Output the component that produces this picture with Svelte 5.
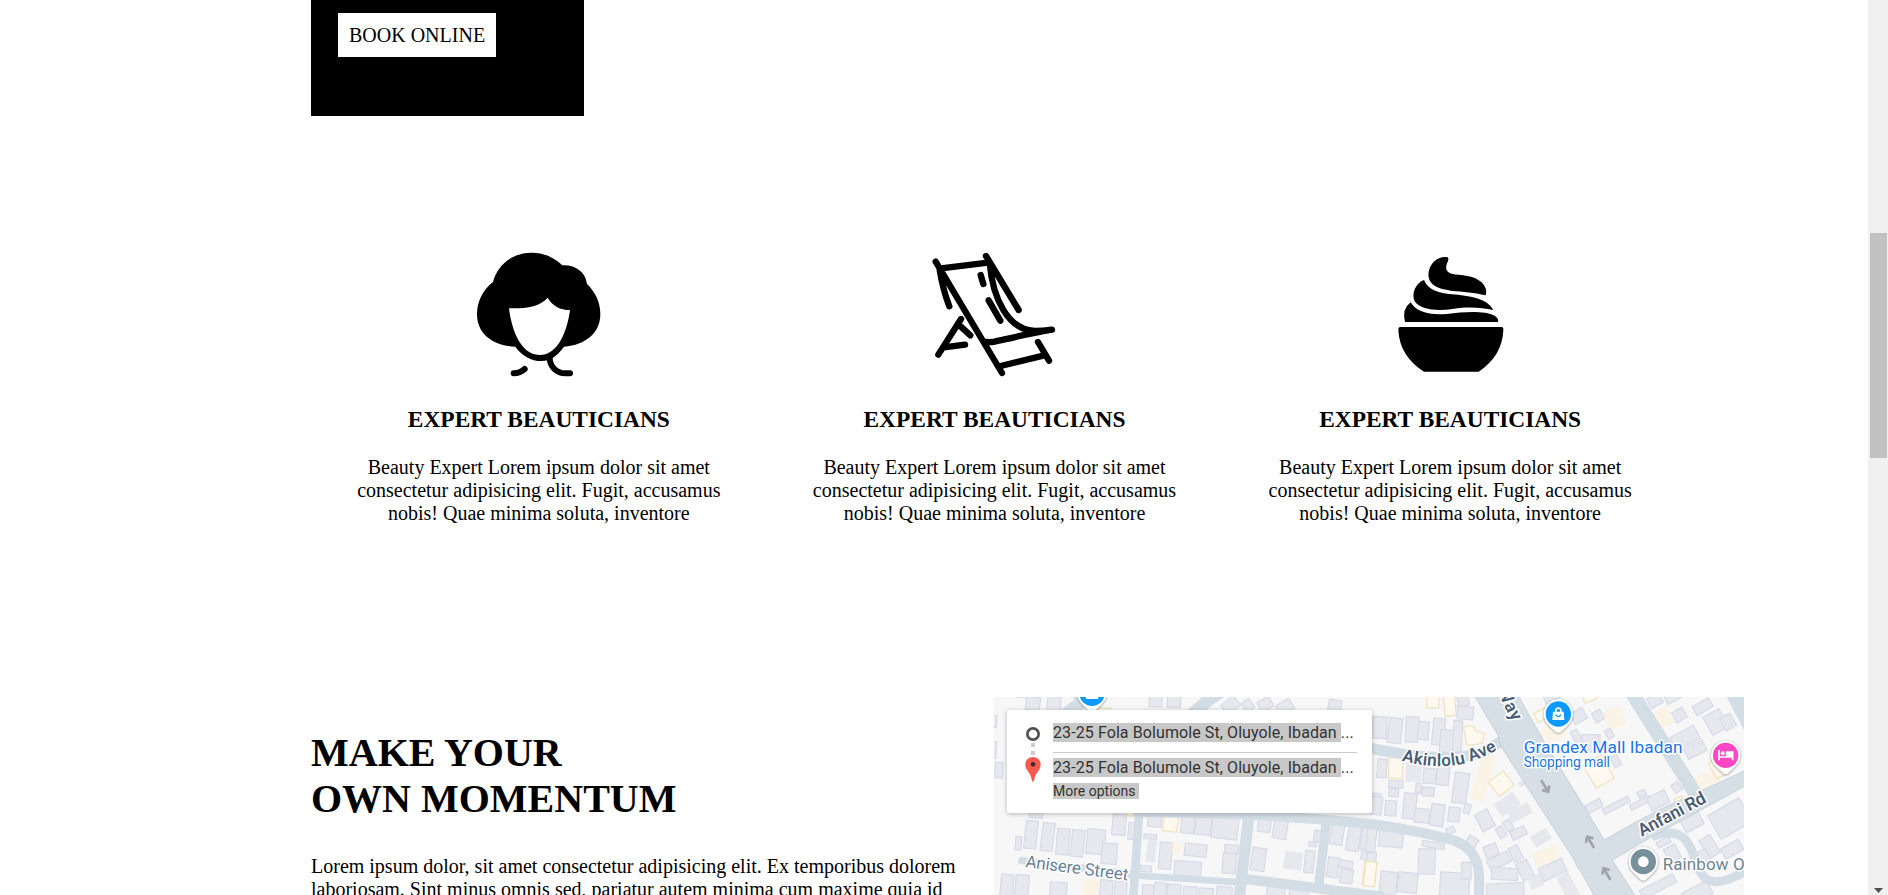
<script>
  const features = ['face', 'chair', 'bowl'];

  // Footprints: x, y, width, height, rotation, kind (g grey, f flat grey, y yellow, p pale)
  const west = [
    [80,8,68,16,5,'g'],[108,22,42,38,6,'g'],[172,20,40,44,5,'g'],[478,8,38,42,2,'g'],[532,8,40,44,2,'g'],
    [698,28,48,36,-38,'g'],[760,30,28,32,-35,'g'],[806,26,40,34,-30,'g'],[862,34,46,34,-32,'g'],[1015,30,38,40,10,'g'],[325,54,36,16,4,'y'],
    [8,76,12,36,3,'g'],[6,155,13,50,4,'g'],[15,217,23,47,2,'g'],[1148,82,30,62,0,'g'],[1142,310,30,38,10,'g'],
    [76,440,18,40,5,'g'],[105,392,36,84,6,'g'],[155,399,36,84,7,'g'],[200,416,38,78,5,'g'],[244,420,38,80,6,'g'],
    [290,418,55,74,5,'g'],[335,460,46,62,4,'g'],[367,373,40,62,5,'g'],[415,398,20,50,5,'g'],[118,366,40,18,4,'g'],
    [410,366,24,12,4,'y'],[474,370,40,40,6,'g'],[520,368,44,56,8,'y'],[574,370,40,60,6,'g'],[616,370,48,64,5,'g'],
    [666,374,78,72,7,'g'],[462,433,38,14,4,'g'],[470,450,28,66,6,'f'],[508,457,37,80,5,'g'],[547,461,27,28,0,'p'],
    [584,462,66,37,6,'g'],[553,514,80,44,4,'g'],[704,464,40,28,3,'g'],[698,490,40,60,4,'g'],[450,527,34,18,4,'g'],
    [784,474,42,68,8,'g'],[805,372,38,54,7,'g'],[850,383,42,63,8,'g'],[883,485,53,54,8,'f'],[944,482,28,66,6,'g'],
    [972,422,30,34,8,'g'],[957,455,22,15,5,'g'],[1022,402,38,62,9,'g'],[1072,410,38,73,9,'g'],[1114,408,44,72,9,'g'],
    [1113,485,45,25,8,'g'],[1012,502,34,60,8,'g'],[1048,512,40,22,8,'g'],[1050,538,38,42,8,'g'],[1121,514,36,72,6,'y'],
    [32,553,38,66,5,'g'],[76,555,40,65,5,'g'],[180,577,50,42,3,'g'],[277,568,48,50,5,'p'],[330,570,38,50,4,'g'],
    [374,574,36,50,4,'g'],[457,585,34,40,5,'g'],[492,578,36,45,5,'g'],[532,583,40,40,4,'g'],[580,590,40,30,4,'g'],
    [626,595,44,30,4,'g'],[680,590,46,40,4,'g'],[830,588,55,35,5,'g'],[898,586,58,45,6,'g']
  ];
  const east = [
    [10,80,40,65,3,'g'],[55,84,40,75,6,'g'],[107,80,38,76,3,'g'],[144,95,32,54,5,'g'],[188,85,36,80,5,'g'],[210,120,55,68,5,'g'],
    [250,92,26,95,3,'g'],[170,10,37,44,3,'y'],[222,12,34,66,-5,'y'],[262,10,34,38,-8,'g'],[262,50,48,38,4,'g'],
    [22,207,28,56,4,'g'],[56,203,42,62,2,'y'],[107,218,48,58,4,'f'],[160,235,38,45,4,'g'],[200,215,38,70,5,'g'],[250,248,43,92,8,'g'],
    [57,272,42,22,4,'g'],[57,295,28,25,4,'g'],[137,280,17,30,6,'g'],[157,292,36,26,5,'g'],[4,320,32,54,6,'g'],[45,332,34,45,4,'g'],
    [100,310,38,76,6,'g'],[134,356,44,42,4,'g'],[182,342,40,66,7,'g'],[235,352,34,43,6,'g'],[282,342,19,28,15,'g'],[230,412,24,18,-22,'g'],
    [290,441,32,28,32,'g'],[324,363,42,56,-28,'g'],[378,320,68,46,-35,'f'],[415,350,70,36,-28,'f'],[382,410,22,34,-30,'g'],[404,390,22,32,-30,'g'],
    [422,415,46,28,-26,'g'],[446,270,26,17,-30,'f'],[318,190,42,145,16,'p'],[366,254,56,54,-38,'y'],[485,424,55,38,-32,'f'],[490,474,74,44,-24,'p'],
    [343,464,40,36,-20,'g'],[353,496,68,34,-26,'g'],[422,468,30,44,-26,'g'],[446,512,37,56,-26,'g'],[365,534,78,36,3,'g'],[476,555,42,38,-22,'f'],
    [510,518,76,42,-25,'g'],[575,550,40,80,-28,'f'],[350,580,112,50,-3,'g'],[210,548,88,76,3,'g'],[275,517,28,50,-3,'g'],[30,545,50,70,5,'g'],
    [84,548,58,60,6,'g'],[145,477,50,75,2,'g'],[157,456,66,18,10,'g'],[27,425,72,46,5,'g'],[-10,415,27,70,5,'g'],[-10,488,28,28,4,'g'],[-16,515,33,74,6,'y'],
    [520,0,50,32,-25,'g'],[495,58,50,30,-28,'y'],[605,60,42,36,-30,'g'],[670,62,28,32,-30,'g'],[640,12,38,22,-20,'y'],[708,54,52,62,-25,'p'],
    [520,103,62,50,-28,'p'],[608,120,22,38,-30,'g'],[636,134,54,52,0,'g'],[708,117,20,28,-30,'g'],[726,195,22,35,-28,'g'],[655,205,62,80,-30,'y'],
    [648,335,49,26,-28,'g'],[696,337,86,18,-27,'g'],[778,330,66,17,-27,'g'],[803,302,24,18,-27,'g'],[834,310,60,42,-27,'g'],[908,278,24,28,-35,'g'],
    [915,322,26,18,-25,'y'],[842,58,62,56,-28,'p'],[835,16,40,32,-28,'g'],[910,58,36,34,-30,'g'],[905,122,80,44,-28,'g'],[885,6,48,28,-28,'g'],
    [970,35,56,30,-30,'g'],[1010,65,55,62,-30,'g'],[1056,75,36,42,-30,'g'],[945,162,62,34,-27,'g'],[975,248,74,46,-28,'p'],[1025,205,45,54,-28,'y'],
    [932,358,60,60,-28,'g'],[1026,345,108,82,-30,'g'],[1055,460,62,35,-30,'g'],[1000,438,38,62,-32,'g'],[860,448,42,18,-28,'g'],[888,468,38,44,-28,'g'],
    [808,575,112,28,-27,'g'],[940,588,84,44,-28,'g'],[978,482,38,36,-28,'g'],[1100,0,40,36,-28,'g']
  ];
</script>

{#snippet blocks(list)}
  {#each list as [x, y, w, h, r, kind]}
    <rect class={kind} {x} {y} width={w} height={h} transform={`rotate(${r} ${x + w / 2} ${y + h / 2})`} />
  {/each}
{/snippet}

{#snippet pin(x, y, color)}
  <g transform={`translate(${x} ${y})`}>
    <path class="pin-shadow" d="M0-44A44 44 0 0 1 44 0C44 24 27 35 14 48Q0 66-14 48C-27 35-44 24-44 0A44 44 0 0 1 0-44Z" />
    <circle r="38" fill={color} />
  </g>
{/snippet}

<div class="page">
  <main>
    <div class="hero"><a class="book" href="#book">BOOK ONLINE</a></div>

    <section class="features">
      {#each features as icon}
        <article>
          {#if icon === 'face'}
            <svg class="icon" viewBox="-3 0 480 429">
              <path d="M99 126C112 74 158 38 215 38C252 38 283 53 307 76C347 74 377 97 381 132C406 156 421 187 421 222C421 279 377 315 312 320C295 344 276 357 263 361C227 370 189 352 166 320C99 318 51 282 51 223C51 184 69 149 99 126ZM147 205C154 264 180 345 239 345C296 345 322 270 330 210C300 210 278 198 263 173C241 199 201 206 147 205Z" fill-rule="evenodd" />
              <path class="line" stroke-width="18" d="M161 400Q180 400 194 387M269 354C270 382 291 400 316 400H330" />
            </svg>
          {:else if icon === 'chair'}
            <svg class="icon" viewBox="-2 0 480 429">
              <path class="line" stroke-width="19" d="M63 65L262 399M79 85L220 68M214 48L312 210M75 90Q85 150 104 199M225 68C234 175 280 270 360 273Q385 273 412 269C350 279 289 294 240 305Q224 308 207 305M198 105L206 132M222 181L257 242M139 237L71 344M132 254L167 286M88 322L151 314M370 306L403 362M258 378L389 346" />
            </svg>
          {:else}
            <svg class="icon" viewBox="-1 0 480 429">
              <path d="M228 51Q237 52 233 63C224 81 225 96 244 101C273 107 309 104 334 127Q352 145 346 166C310 157 281 156 242 152C203 147 179 135 175 112C171 79 195 49 228 51ZM161 120C172 150 209 160 244 163C296 167 352 176 369 210C333 202 291 200 247 207C202 213 151 211 133 184C122 159 138 128 161 120ZM121 187C139 216 174 226 229 222C287 214 343 212 373 227Q386 235 383 246H104Q94 207 121 187ZM89 261H394Q400 262 399 271C397 323 371 365 325 395H161C114 365 86 323 84 269Q84 262 89 261Z" />
            </svg>
          {/if}
          <h3>EXPERT BEAUTICIANS</h3>
          <p>Beauty Expert Lorem ipsum dolor sit amet<br />consectetur adipisicing elit. Fugit, accusamus<br />nobis! Quae minima soluta, inventore</p>
        </article>
      {/each}
    </section>

    <section class="momentum">
      <div class="copy">
        <h1>MAKE YOUR<br />OWN MOMENTUM</h1>
        <p>Lorem ipsum dolor, sit amet consectetur adipisicing elit. Ex temporibus dolorem<br />laboriosam. Sint minus omnis sed, pariatur autem minima cum maxime quia id</p>
      </div>

      <div class="map">
        <svg class="canvas" width="750" height="198" viewBox="12 21 2250 594">
          {@render blocks(west)}
          <g transform="translate(1140 0)">{@render blocks(east)}
            <path class="y" d="M291 106L314 111L317 122L344 130L336 160L290 166L281 113Z" />
          </g>
          <g class="road">
            <path stroke-width="26" d="M448 360L430 620" />
            <path stroke-width="20" d="M415 555Q600 567 755 577" />
            <path stroke-width="30" d="M760 566L1180 620" />
            <path stroke-width="34" d="M778 365Q765 480 748 620" />
            <path stroke-width="28" d="M1010 385L986 590" />
            <path stroke-width="30" d="M430 365L730 372Q950 382 1145 402Q1270 420 1370 445Q1466 467 1467 560V620" />
            <path stroke-width="38" d="M605 75L655 30L700 0M210 85L270 40V5" />
            <path stroke-width="22" stroke-linecap="round" d="M95 512L150 518L420 552" />
          </g>
          <g transform="translate(1140 0)">
            <g class="road">
              <path stroke-width="33" d="M-10 172Q150 207 255 202Q340 198 405 145" />
              <path stroke-width="42" d="M780 0L865 135L975 310" />
              <path stroke-width="46" d="M1080 -10L1150 125" />
              <path stroke-width="27" d="M845 440C940 405 960 460 976 510C995 575 1025 600 1125 545" />
            </g>
            <path class="avenue" d="M303 0L385 138Q385 160 400 180L613 510Q616 524 635 549L680 630H804L727 511L820 455L890 416L1145 277V233L985 306Q850 362 703 450L520 150L435 0Z" />
            <g class="arrow">
              <path d="M0-20V20M-13 6L0 20L13 6" transform="translate(524 288) rotate(-31)" />
              <path d="M0-20V20M-13 6L0 20L13 6" transform="translate(662 457) rotate(149)" />
              <path d="M0-20V20M-13 6L0 20L13 6" transform="translate(711 552) rotate(149)" />
            </g>
            <path id="akinlolu" d="M94 212Q220 245 310 212Q350 198 390 174" fill="none" />
            <text class="street" font-size="52"><textPath href="#akinlolu" textLength="298">Akinlolu Ave</textPath></text>
            <text class="street" font-size="53" transform="translate(380 3) rotate(63)" textLength="104">Way</text>
            <text class="street" font-size="53" transform="translate(815 440) rotate(-28)" textLength="223">Anfani Rd</text>
            {@render pin(565, 72, '#0d99ff')}
            <path fill="#fff" d="M549 65H581L583 90H547ZM555 65V61C555 49 575 49 575 61V65H570V61C570 56 560 56 560 61V65Z" />
            <path d="M557 74Q565 86 573 74" fill="none" stroke="#0d99ff" stroke-width="4" />
            {@render pin(1067, 196, '#ff47c4')}
            <path fill="none" stroke="#fff" stroke-width="5" d="M1047 180V211M1047 201H1088M1088 211V186H1070V200" />
            <path fill="#fff" d="M1070 186H1088V201H1070Z" /><circle cx="1058" cy="190" r="6" fill="#fff" />
            {@render pin(820, 515, '#78909c')}
            <circle cx="820" cy="515" r="16" fill="#fff" />
            <text class="place" x="461" y="188" font-size="52" textLength="477">Grandex Mall Ibadan</text>
            <text class="place" x="461" y="231" font-size="42" textLength="259">Shopping mall</text>
            <text class="place muted" x="878" y="541" font-size="51" textLength="246">Rainbow O</text>
          </g>
          <text class="street light" font-size="51" transform="translate(105 531) rotate(7.5)" textLength="310">Anisere Street</text>
          {@render pin(306, 10, '#0d99ff')}
          <path fill="#fff" d="M288 8H325V27H288Z" />
        </svg>

        <div class="directions">
          <svg class="route" width="16" height="56" viewBox="104 108 48 168">
            <circle cx="128" cy="132" r="17" fill="none" stroke="#505050" stroke-width="8" />
            <path fill="#ccc" d="M122 159H134V171H122ZM122 183H134V195H122Z" />
            <path fill="#fa5950" d="M128 201C114 201 105 211 105 224C105 241 121 245 125 272Q128 277 131 272C135 245 151 241 151 224C151 211 142 201 128 201Z" />
            <circle cx="128" cy="223" r="7" fill="#333" />
          </svg>
          <div class="stops">
            <div class="stop"><mark>23-25 Fola Bolumole St, Oluyole, Ibadan&nbsp;</mark><span>...</span></div>
            <div class="stop second"><mark>23-25 Fola Bolumole St, Oluyole, Ibadan&nbsp;</mark><span>...</span></div>
            <div class="more"><mark>More options&nbsp;</mark></div>
          </div>
        </div>
      </div>
    </section>
  </main>

  <div class="scrollbar">
    <div class="thumb"></div>
    <svg width="9" height="5" viewBox="0 0 9 5"><path d="M0 0H9L4.5 5Z" fill="#505050" /></svg>
  </div>
</div>

<style>
  :global(body) { margin: 0; overflow: hidden; background: #fff; }
  .page {
    display: flex;
    justify-content: space-between;
    height: 895px;
    overflow: hidden;
    font: 20px/23px "Liberation Serif", "Times New Roman", serif;
    color: #000;
  }
  main { width: 1367px; margin-left: 311px; }
  .hero {
    box-sizing: border-box;
    width: 273px;
    height: 116px;
    padding: 13px 27px;
    background: #000;
  }
  .book {
    display: block;
    width: max-content;
    padding: 11px 11px 10px;
    background: #fff;
    color: #000;
    text-decoration: none;
    white-space: nowrap;
  }
  .features {
    display: grid;
    grid-template-columns: repeat(3, 1fr);
    padding-top: 124px;
    height: 457px;
    text-align: center;
  }
  .icon { display: block; width: 160px; height: 143px; margin: 0 auto 23px; }
  .line { fill: none; stroke: #000; stroke-linecap: round; stroke-linejoin: round; }
  h1, h3, p { margin: 0; }
  h3 { margin-bottom: 23px; font-size: 23.4px; line-height: 27px; }
  .momentum { display: flex; }
  .copy { flex: 0 0 683px; padding-top: 33px; white-space: nowrap; }
  h1 { margin-bottom: 33px; font-size: 40px; line-height: 46px; }
  .map {
    position: relative;
    flex: 0 0 750px;
    height: 198px;
    overflow: hidden;
    background: #f7f7f7;
    font-family: Roboto, sans-serif;
  }
  .canvas { display: block; }
  .g { fill: #e7e8ed; stroke: #d7d9e9; stroke-width: 3.5; }
  .f { fill: #e7e8ed; }
  .y { fill: #fef9ee; stroke: #f0e3c3; stroke-width: 4; }
  .p { fill: #fbf4e6; }
  .road { fill: none; stroke: #d3dde5; stroke-linejoin: round; }
  .avenue { fill: #d6dfe6; stroke: #c0ced4; stroke-width: 2.5; }
  .arrow { fill: none; stroke: #9fa5aa; stroke-width: 8; }
  .pin-shadow { fill: #fff; filter: drop-shadow(0 2px 3px #0006); }
  .street, .place {
    font-family: Roboto, sans-serif;
    stroke: #fff;
    stroke-width: 9;
    stroke-linejoin: round;
    paint-order: stroke;
  }
  .street { fill: #4b5d73; font-weight: 600; }
  .street.light { fill: #687e98; font-weight: 400; }
  .place { fill: #1a73e8; }
  .place.muted { fill: #6f8490; }
  .directions {
    position: absolute;
    left: 13px;
    top: 13px;
    box-sizing: border-box;
    display: flex;
    width: 365px;
    height: 103px;
    padding: 13px 15px 0 18px;
    border-radius: 2px;
    background: #fff;
    box-shadow: 0 1px 5px #0004;
    color: #333;
  }
  .route { flex: none; margin: 3px 12px 0 0; }
  .stops { flex: 1; }
  .stop {
    display: flex;
    box-sizing: border-box;
    height: 30px;
    border-bottom: 1px solid #ccc;
    font-size: 16px;
    line-height: 19px;
    letter-spacing: 0.09px;
    white-space: nowrap;
  }
  .stop.second { height: 30px; border: 0; padding-top: 5px; }
  .more { display: flex; font-size: 14px; line-height: 16px; }
  mark { height: max-content; background: #c8c8c8; color: #333; }
  .scrollbar {
    display: flex;
    flex-direction: column;
    justify-content: space-between;
    align-items: center;
    box-sizing: border-box;
    width: 20px;
    padding: 233px 0 2px;
    background: #f0f0f0;
  }
  .thumb { width: 17px; height: 225px; background: #c1c1c1; }
</style>
